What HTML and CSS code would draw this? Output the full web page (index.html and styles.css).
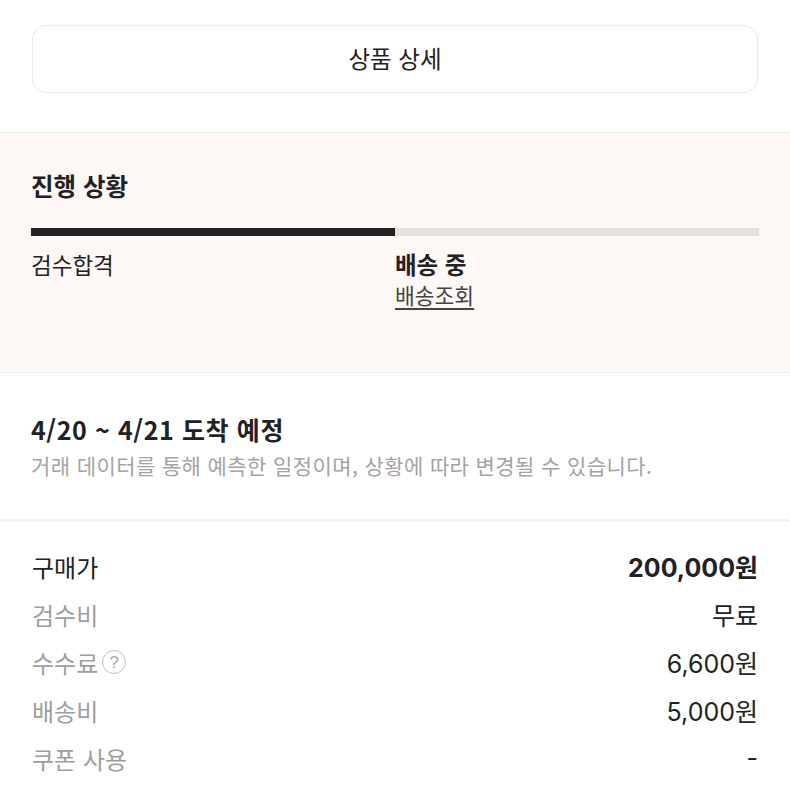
FILE: index.html
```html
<!DOCTYPE html>
<html lang="ko">
<head>
	<meta charset="utf-8">
	<link rel="stylesheet" href="styles.css">
</head>
<body>
	<div class="top">
		<button class="detail-btn">상품 상세</button>
	</div>

	<section class="status">
		<h2 class="status-title">진행 상황</h2>
		<div class="bar"><div class="bar-fill"></div></div>
		<div class="steps">
			<div class="step">검수합격</div>
			<div class="step">
				<div class="step-now">배송 중</div>
				<a class="track" href="#">배송조회</a>
			</div>
		</div>
	</section>

	<section class="eta">
		<h2 class="eta-title">4/20 ~ 4/21 도착 예정</h2>
		<p class="eta-note">거래 데이터를 통해 예측한 일정이며, 상황에 따라 변경될 수 있습니다.</p>
	</section>

	<section class="price">
		<div class="row main">
			<span class="label">구매가</span>
			<span class="value">200,000원</span>
		</div>
		<div class="row">
			<span class="label">검수비</span>
			<span class="value">무료</span>
		</div>
		<div class="row">
			<span class="label">수수료<span class="help">?</span></span>
			<span class="value">6,600원</span>
		</div>
		<div class="row">
			<span class="label">배송비</span>
			<span class="value">5,000원</span>
		</div>
		<div class="row">
			<span class="label">쿠폰 사용</span>
			<span class="value">-</span>
		</div>
	</section>
</body>
</html>
```

FILE: styles.css
```css
html, body {
	margin: 0;
	background: #fff;
}
body {
	font-family: "Noto Sans CJK KR", "Noto Sans", sans-serif;
	color: #222;
}

.top {
	padding: 25px 32px 39px;
}
.detail-btn {
	display: block;
	width: 100%;
	height: 68px;
	padding: 0 0 3px;
	border: 1px solid #ebebeb;
	border-radius: 14px;
	background: #fff;
	font-family: inherit;
	font-size: 23.5px;
	color: #222;
}

.status {
	background: #fdf7f5;
	border-top: 1px solid #efefef;
	border-bottom: 1px solid #f0eceb;
	padding: 37px 31px 62px;
}
.status-title {
	margin: 0;
	font-size: 24.5px;
	line-height: 32px;
	font-weight: 700;
}
.bar {
	margin-top: 26px;
	height: 8px;
	background: #e5e1df;
}
.bar-fill {
	width: 50%;
	height: 100%;
	background: #222;
}
.steps {
	display: grid;
	grid-template-columns: 50% 50%;
	margin-top: 13px;
}
.step {
	font-size: 22.5px;
	line-height: 30px;
}
.step-now {
	font-size: 23.5px;
	font-weight: 700;
}
.track {
	display: inline-block;
	font-size: 21.5px;
	line-height: 30px;
	color: #444;
	text-decoration: underline;
	text-underline-offset: 4px;
}

.eta {
	padding: 40px 31px 40px;
	border-bottom: 3px solid #f4f4f4;
}
.eta-title {
	margin: 0;
	font-size: 25px;
	line-height: 32px;
	font-weight: 700;
	letter-spacing: 0.6px;
}
.eta-note {
	margin: 6px 0 0;
	font-size: 21px;
	line-height: 28px;
	letter-spacing: 0.4px;
	color: #a3a3a3;
}

.price {
	padding: 20px 32px;
}
.row {
	display: flex;
	justify-content: space-between;
	align-items: center;
	height: 48px;
	font-size: 24px;
}
.label {
	display: flex;
	align-items: center;
	color: #9e9e9e;
}
.row.main .label {
	color: #222;
}
.value {
	font-family: "Inter", "Noto Sans CJK KR", sans-serif;
	font-size: 25px;
	color: #222;
}
.row.main .value {
	font-weight: 700;
}
.help {
	display: inline-flex;
	flex-shrink: 0;
	align-items: center;
	justify-content: center;
	width: 24px;
	height: 24px;
	margin-left: 4px;
	border: 1.5px solid #c0c0c0;
	border-radius: 50%;
	box-sizing: border-box;
	font-family: "Liberation Sans", sans-serif;
	font-size: 17px;
	line-height: 1;
	color: #aaa;
}
```
